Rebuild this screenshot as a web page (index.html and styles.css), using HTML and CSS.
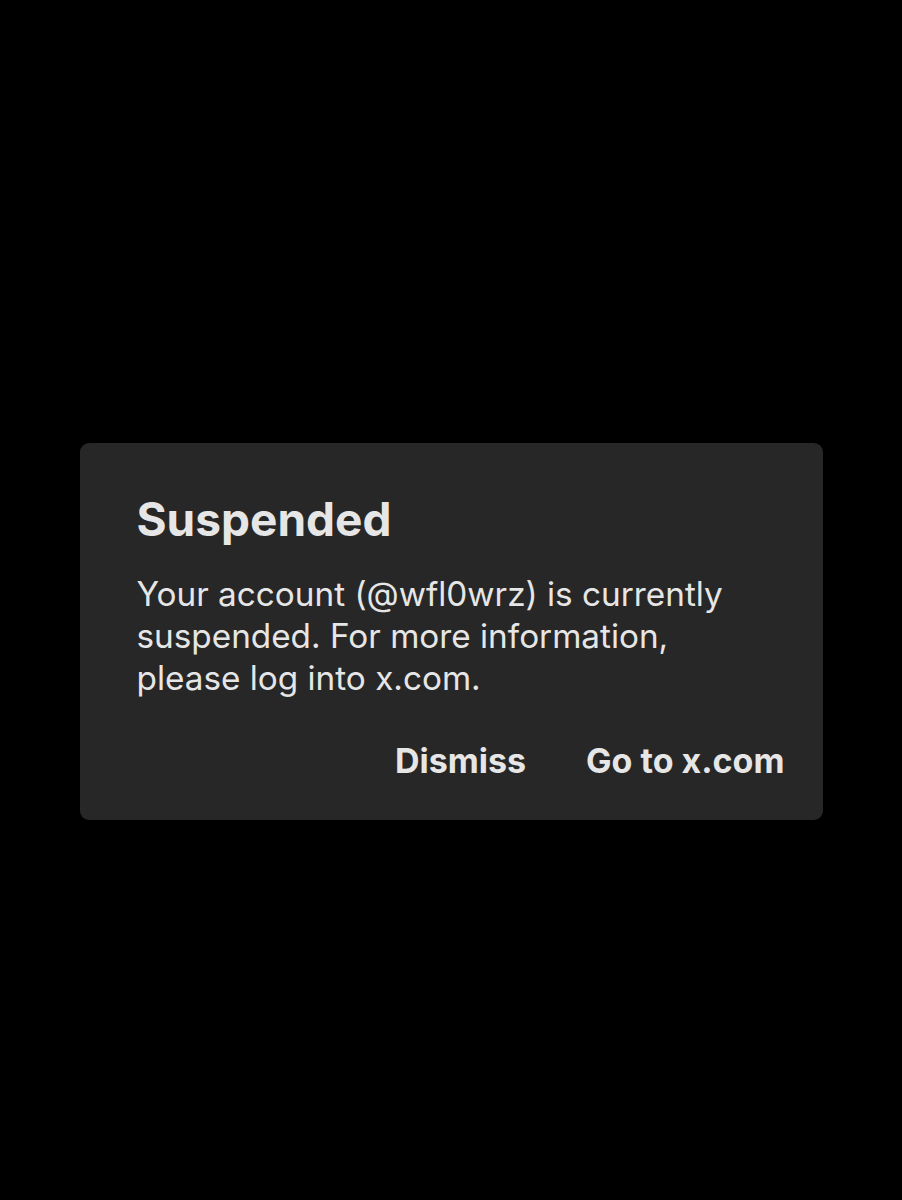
FILE: index.html
```html
<!DOCTYPE html>
<html>
<head>
<meta charset="utf-8">
<link rel="stylesheet" href="styles.css">
</head>
<body>
<div class="dialog">
  <h1 class="title">Suspended</h1>
  <p class="message">Your account (@wfl0wrz) is currently suspended. For more information, please log into x.com.</p>
  <div class="actions">
    <button class="action">Dismiss</button>
    <button class="action">Go to x.com</button>
  </div>
</div>
</body>
</html>
```
FILE: styles.css
```css
html, body {
  margin: 0;
  background: #000;
}
body {
  height: 1200px;
  font-family: Inter, "Noto Sans", sans-serif;
  color: #e6e6e6;
}
.dialog {
  width: 743px;
  height: 377px;
  box-sizing: border-box;
  margin: 443px auto 0;
  background: #272727;
  border-radius: 9px;
  padding: 48px 38px 0 57px;
}
.title {
  margin: 0;
  font-size: 46px;
  font-weight: 700;
  line-height: 56px;
}
.message {
  margin: 26px 0 0;
  font-size: 33.3px;
  font-weight: 400;
  line-height: 42px;
  width: 600px;
}
.actions {
  display: flex;
  justify-content: flex-end;
  gap: 60px;
  margin-top: 40px;
}
.action {
  background: none;
  border: 0;
  padding: 0;
  color: #e6e6e6;
  font-family: Inter, "Noto Sans", sans-serif;
  font-size: 34px;
  font-weight: 700;
  line-height: 44px;
}
```
